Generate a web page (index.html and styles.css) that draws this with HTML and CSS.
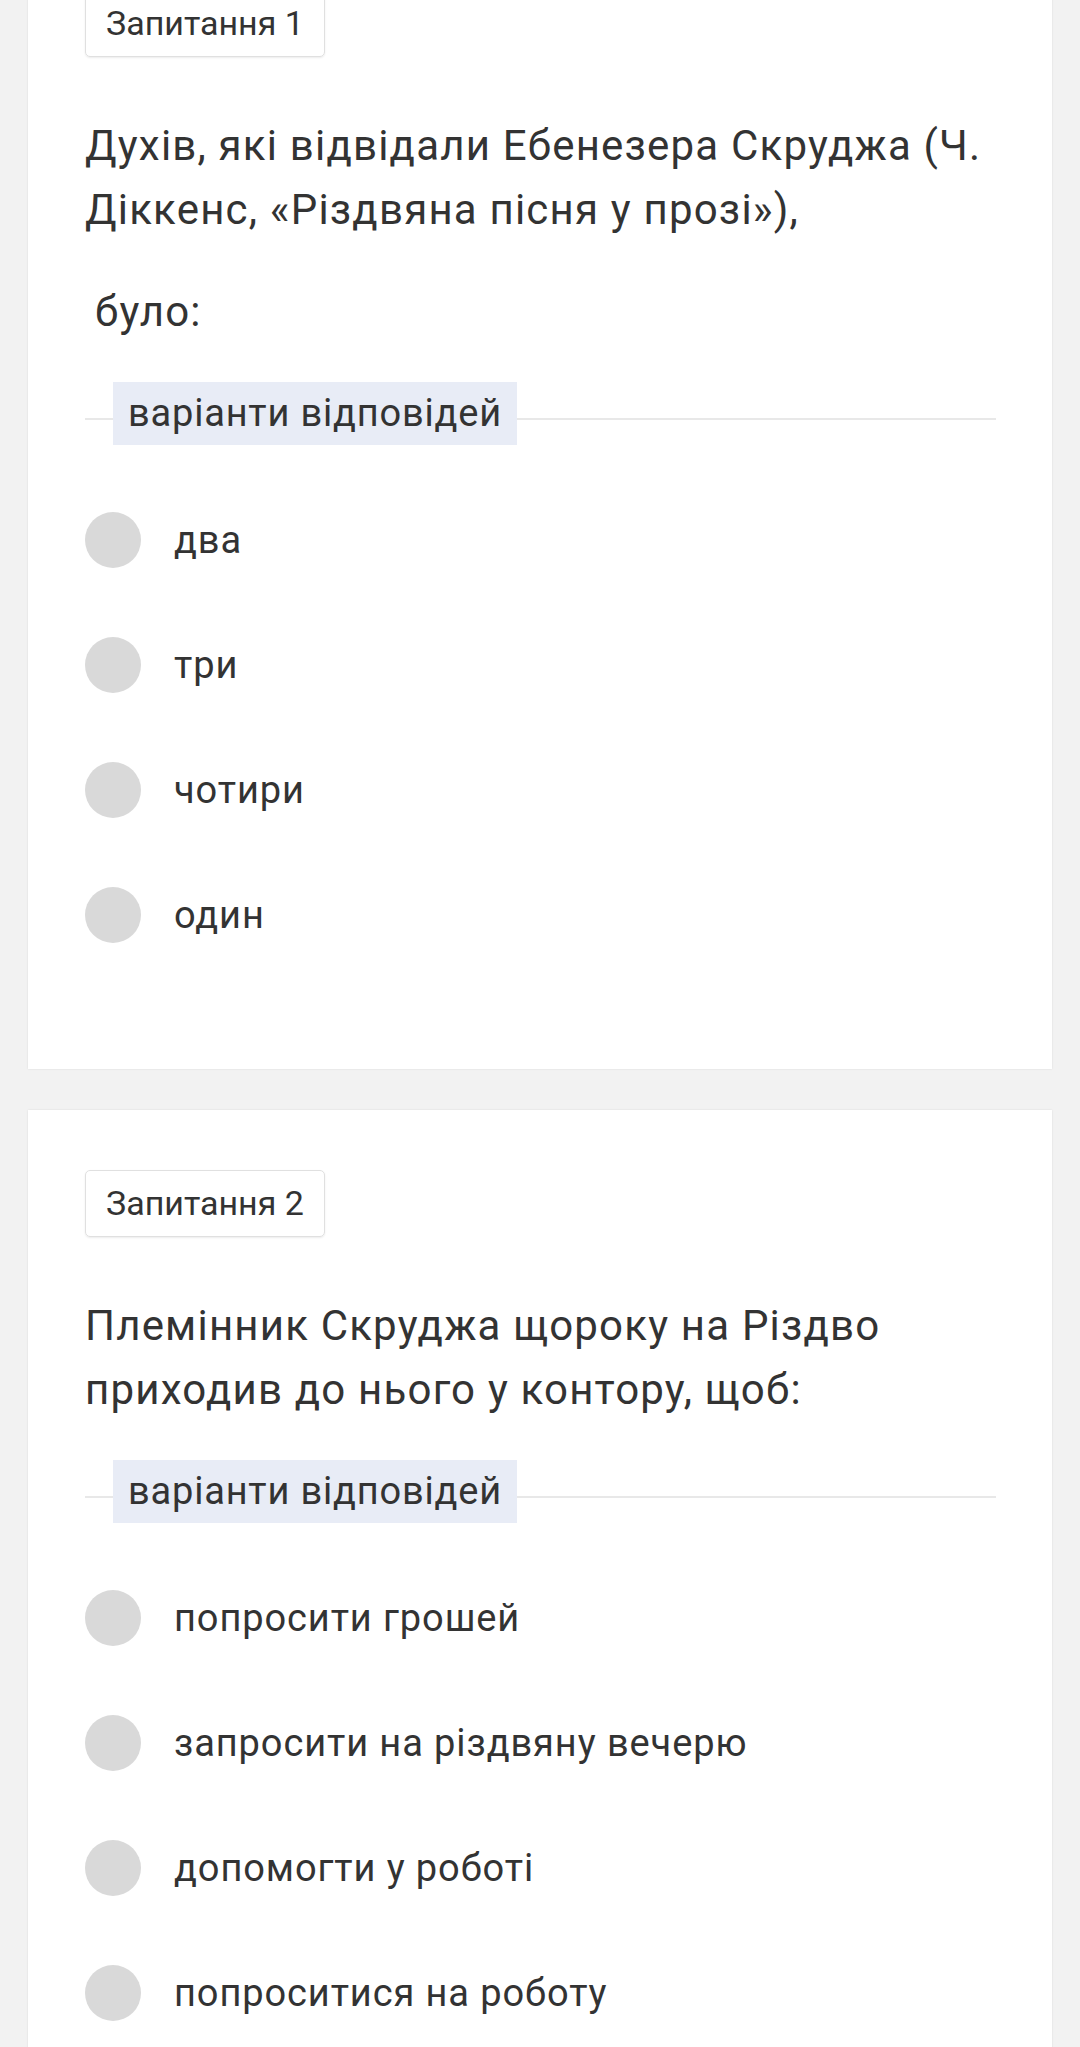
FILE: index.html
```html
<!DOCTYPE html>
<html lang="uk">
<head>
    <meta charset="UTF-8">
    <meta name="viewport" content="width=device-width, initial-scale=1.0">
    <title>Тест</title>
    <link rel="stylesheet" href="styles.css">
</head>
<body>
    <div class="card first">
        <div class="badge">Запитання 1</div>
        <p class="question">Духів, які відвідали Ебенезера Скруджа (Ч.<br>Діккенс, «Різдвяна пісня у прозі»),</p>
        <p class="question indent">було:</p>
        <div class="answers-head"><span>варіанти відповідей</span></div>
        <ul class="options">
            <li><span class="radio"></span>два</li>
            <li><span class="radio"></span>три</li>
            <li><span class="radio"></span>чотири</li>
            <li><span class="radio"></span>один</li>
        </ul>
    </div>

    <div class="card">
        <div class="badge">Запитання 2</div>
        <p class="question">Племінник Скруджа щороку на Різдво<br>приходив до нього у контору, щоб:</p>
        <div class="answers-head"><span>варіанти відповідей</span></div>
        <ul class="options">
            <li><span class="radio"></span>попросити грошей</li>
            <li><span class="radio"></span>запросити на різдвяну вечерю</li>
            <li><span class="radio"></span>допомогти у роботі</li>
            <li><span class="radio"></span>попроситися на роботу</li>
        </ul>
    </div>
</body>
</html>
```

FILE: styles.css
```css
body {
    margin: 0;
    background-color: #f2f2f2;
    font-family: Roboto, "Noto Sans", sans-serif;
    color: #333;
}
.card {
    background-color: #fff;
    margin: 0 28px 41px;
    padding: 60px 56px 92px 57px;
    box-shadow: 0 0 2px rgba(0, 0, 0, 0.1);
}
.card.first {
    margin-top: -70px;
}
.badge {
    display: inline-block;
    box-sizing: border-box;
    height: 67px;
    line-height: 65px;
    padding: 0 20px;
    font-size: 34px;
    border: 1px solid #e0e0e0;
    border-radius: 5px;
    box-shadow: 0 1px 2px rgba(0, 0, 0, 0.08);
}
.question {
    margin: 57px 0 38px;
    font-size: 42px;
    letter-spacing: 1.2px;
    line-height: 64px;
}
.question + .question {
    margin-top: 0;
}
.indent {
    padding-left: 10px;
}
.answers-head {
    display: flex;
    align-items: center;
    height: 63px;
}
.answers-head::before,
.answers-head::after {
    content: "";
    height: 2px;
    margin-top: 10px;
    background-color: #e8e8e8;
}
.answers-head::before {
    width: 28px;
}
.answers-head::after {
    flex: 1;
}
.answers-head span {
    display: block;
    height: 63px;
    line-height: 63px;
    padding: 0 15px;
    font-size: 38px;
    letter-spacing: 0.8px;
    background-color: #e8ecf6;
}
.options {
    list-style: none;
    margin: 32px 0 0;
    padding: 0;
}
.options li {
    display: flex;
    align-items: center;
    height: 125px;
    font-size: 38px;
    letter-spacing: 0.9px;
}
.radio {
    width: 56px;
    height: 56px;
    margin-right: 33px;
    border-radius: 50%;
    background-color: #d9d9d9;
    flex-shrink: 0;
}
```
